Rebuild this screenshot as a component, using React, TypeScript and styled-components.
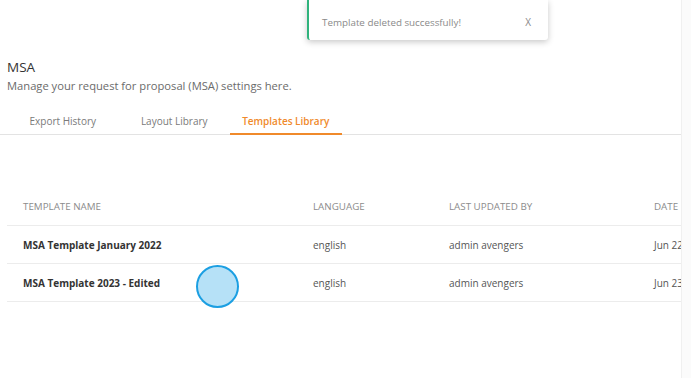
import styled, { createGlobalStyle } from "styled-components";

const GlobalStyle = createGlobalStyle`
  html, body {
    margin: 0;
    padding: 0;
    background: #fbfbfb;
    font-family: "Open Sans", "Liberation Sans", sans-serif;
  }
`;

const Page = styled.div`
  position: relative;
  width: 681px;
  height: 378px;
  background: #ffffff;
  border-right: 1px solid #f0f0f0;
  overflow: hidden;
`;

const Toast = styled.div`
  position: absolute;
  top: 0;
  left: 307px;
  width: 241px;
  height: 40px;
  box-sizing: border-box;
  display: flex;
  align-items: center;
  justify-content: space-between;
  padding: 4px 17px 0 13px;
  background: #fff;
  border-left: 2px solid #2fb37c;
  border-radius: 0 0 3px 3px;
  box-shadow: 0 2px 6px rgba(0, 0, 0, 0.22);
  font-size: 9.8px;
  color: #8a8a8a;
`;

const CloseX = styled.span`
  font-size: 10px;
  color: #8a8a8a;
`;

const Header = styled.div`
  padding: 58px 0 0 7px;
`;

const Title = styled.h1`
  margin: 0;
  font-size: 13.5px;
  font-weight: 400;
  color: #333;
  line-height: 18px;
`;

const Subtitle = styled.p`
  margin: 1px 0 0;
  font-size: 11.2px;
  color: #6b6b6b;
  line-height: 17px;
`;

const Tabs = styled.div`
  display: flex;
  margin-top: 10px;
  margin-left: -7px;
  padding-left: 7px;
  border-bottom: 1px solid #e3e3e3;
`;

const Tab = styled.div<{ $active?: boolean }>`
  width: 111.5px;
  text-align: center;
  font-size: 10px;
  line-height: 14px;
  padding: 10px 0 5px;
  color: ${(p) => (p.$active ? "#f08a2b" : "#7a7a7a")};
  font-weight: ${(p) => (p.$active ? 600 : 400)};
  border-bottom: 2px solid ${(p) => (p.$active ? "#f08a2b" : "transparent")};
  margin-bottom: -1px;
`;

const Table = styled.div`
  margin: 52px 0 0 7px;
  width: 720px;
`;

const Row = styled.div<{ $head?: boolean }>`
  display: grid;
  grid-template-columns: 290px 136px 205px 1fr;
  align-items: center;
  height: ${(p) => (p.$head ? "38px" : "37px")};
  border-bottom: 1px solid #ececec;
`;

const HeadCell = styled.div`
  padding-left: 16px;
  padding-top: 1px;
  font-size: 9.8px;
  color: #8c8c8c;
  text-transform: uppercase;
`;

const Cell = styled.div<{ $bold?: boolean }>`
  padding-left: 16px;
  font-size: 10px;
  color: ${(p) => (p.$bold ? "#333" : "#555")};
  font-weight: ${(p) => (p.$bold ? 700 : 400)};
  white-space: nowrap;
`;

const ClickMark = styled.div`
  position: absolute;
  left: 196px;
  top: 265px;
  width: 39px;
  height: 39px;
  border-radius: 50%;
  background: #b6e1f7;
  border: 2px solid #1c9fe2;
`;

const rows = [
  { name: "MSA Template January 2022", lang: "english", by: "admin avengers", date: "Jun 22" },
  { name: "MSA Template 2023 - Edited", lang: "english", by: "admin avengers", date: "Jun 23" },
];

export default function App() {
  return (
    <Page>
      <GlobalStyle />
      <Header>
        <Title>MSA</Title>
        <Subtitle>Manage your request for proposal (MSA) settings here.</Subtitle>
        <Tabs>
          <Tab>Export History</Tab>
          <Tab>Layout Library</Tab>
          <Tab $active>Templates Library</Tab>
        </Tabs>
      </Header>
      <Table>
        <Row $head>
          <HeadCell>Template Name</HeadCell>
          <HeadCell>Language</HeadCell>
          <HeadCell>Last Updated By</HeadCell>
          <HeadCell>Date</HeadCell>
        </Row>
        {rows.map((r) => (
          <Row key={r.name}>
            <Cell $bold>{r.name}</Cell>
            <Cell>{r.lang}</Cell>
            <Cell>{r.by}</Cell>
            <Cell>{r.date}</Cell>
          </Row>
        ))}
      </Table>
      <Toast>
        <span>Template deleted successfully!</span>
        <CloseX>X</CloseX>
      </Toast>
      <ClickMark />
    </Page>
  );
}
